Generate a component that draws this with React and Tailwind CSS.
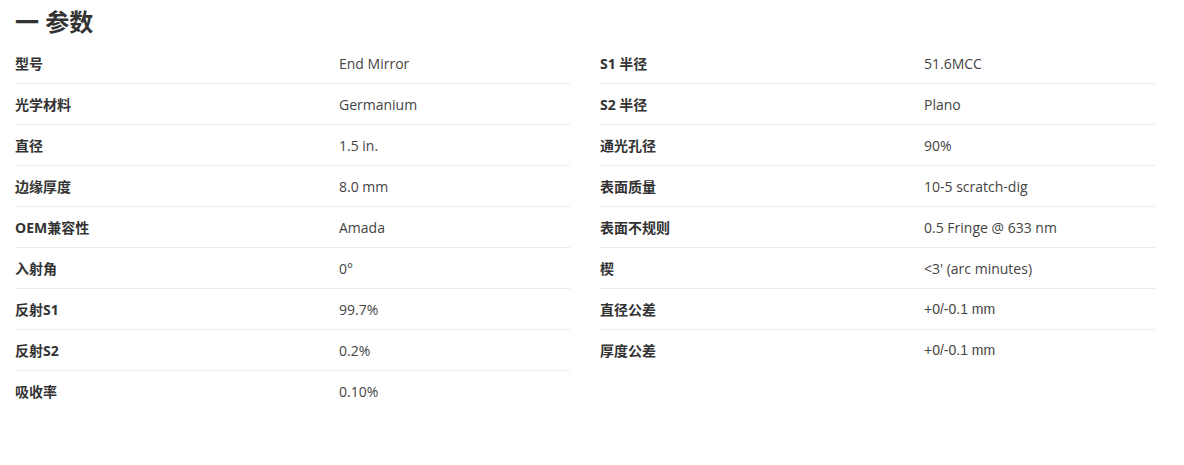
import React from "react";

const left = [
  ["型号", "End Mirror"],
  ["光学材料", "Germanium"],
  ["直径", "1.5 in."],
  ["边缘厚度", "8.0 mm"],
  ["OEM兼容性", "Amada"],
  ["入射角", "0°"],
  ["反射S1", "99.7%"],
  ["反射S2", "0.2%"],
  ["吸收率", "0.10%"],
];

const right = [
  ["S1 半径", "51.6MCC"],
  ["S2 半径", "Plano"],
  ["通光孔径", "90%"],
  ["表面质量", "10-5 scratch-dig"],
  ["表面不规则", "0.5 Fringe @ 633 nm"],
  ["楔", "<3' (arc minutes)"],
  ["直径公差", "+0/-0.1 mm", true],
  ["厚度公差", "+0/-0.1 mm", true],
];

const SpecTable = ({ rows }) => (
  <div className="flex flex-col">
    {rows.map(([label, value, arial], i) => (
      <div
        key={label}
        className={`flex items-center h-[41px] ${
          i < rows.length - 1 ? "border-b border-[#ebebeb]" : ""
        }`}
      >
        <div className="w-[324px] text-[14px] font-bold text-[#333]">{label}</div>
        <div
          className={`text-[14px] text-[#444] ${
            arial ? "font-['Liberation_Sans',sans-serif]" : ""
          }`}
        >
          {value}
        </div>
      </div>
    ))}
  </div>
);

export default function App() {
  return (
    <div className="w-[1184px] h-[465px] bg-white px-[15px] font-['Open_Sans','Noto_Sans_CJK_SC',sans-serif]">
      <div className="h-[43px] flex items-center">
        <h2 className="text-[24px] font-bold text-[#333] leading-none">一 参数</h2>
      </div>
      <div className="grid grid-cols-[555px_555px] gap-x-[30px] items-start">
        <SpecTable rows={left} />
        <SpecTable rows={right} />
      </div>
    </div>
  );
}
